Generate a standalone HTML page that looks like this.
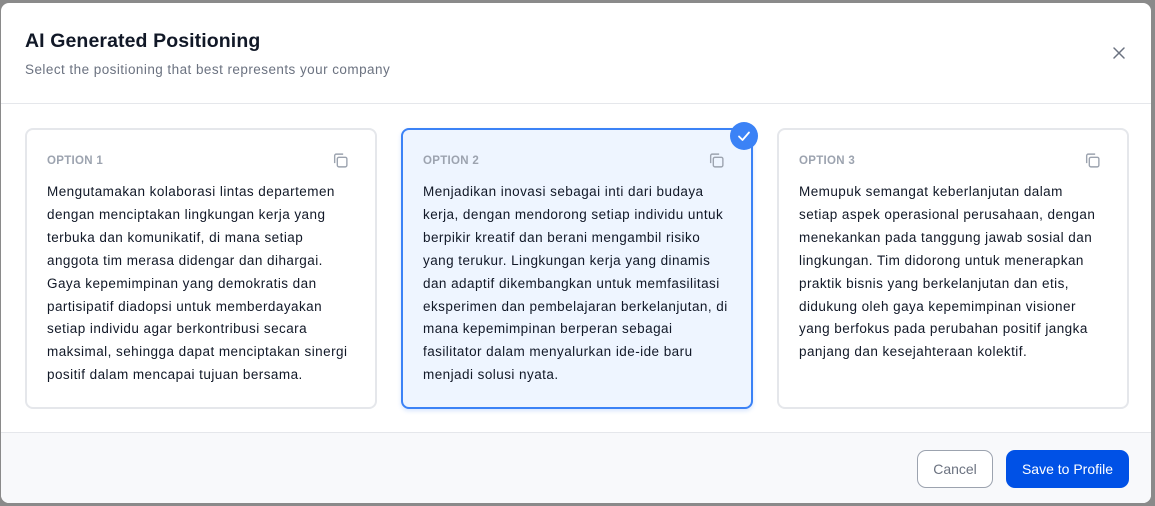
<!DOCTYPE html>
<html><head><style>
body{margin:0;width:1155px;height:506px;background:#8a8a8a;font-family:"Liberation Sans",sans-serif;overflow:hidden;position:relative}
.m{position:absolute;left:1px;top:3px;width:1150px;height:500px;background:#fff;border-radius:8px;overflow:hidden}
.t{position:absolute;left:24px;top:27px;font-size:19.5px;font-weight:bold;color:#111827;letter-spacing:.1px}
.s{position:absolute;left:24px;top:59px;font-size:13.5px;color:#6b7280;letter-spacing:.45px}
.x{position:absolute;left:1108px;top:40px;width:20px;height:20px}
.hd{position:absolute;left:0;top:100px;width:100%;border-top:1px solid #e5e7eb}
.c{position:absolute;top:125px;width:348px;height:277px;border:2px solid #e5e7eb;border-radius:8px;box-sizing:content-box;background:#fff}
.c.sel{border-color:#3b82f6;background:#eef5ff;box-shadow:0 2px 4px rgba(59,130,246,.2)}
.lb{position:absolute;left:20px;top:25px;font-size:11.5px;font-weight:bold;color:#9ca3af;letter-spacing:.3px}
.cp{position:absolute;right:26px;top:22px}
.tx{position:absolute;left:20px;top:51px;width:330px;font-size:13.5px;line-height:22.9px;color:#111827;white-space:nowrap;letter-spacing:.45px}
.ck{position:absolute;left:729px;top:119px;width:28px;height:28px;border-radius:50%;background:#3b82f6}
.ft{position:absolute;left:0;top:429px;width:100%;height:71px;background:#f8f9fb;border-top:1px solid #e5e7eb}
.b1{position:absolute;left:916px;top:447px;width:74px;height:36px;border:1px solid #9ca3af;border-radius:9px;font-size:14px;color:#6b7280;text-align:center;line-height:36px;background:#fff}
.b2{position:absolute;left:1005px;top:447px;width:123px;height:38px;border-radius:9px;background:#0051e6;color:#fff;font-size:14px;text-align:center;line-height:38px}
</style></head><body>
<div class="m">
<div class="t">AI Generated Positioning</div>
<div class="s">Select the positioning that best represents your company</div>
<svg class="x" viewBox="0 0 20 20"><path d="M5 5L15 15M15 5L5 15" stroke="#6b7280" stroke-width="1.5" stroke-linecap="round"/></svg>
<div class="hd"></div>
<div class="c" style="left:24px"><div class="lb">OPTION 1</div><svg class="cp" width="17" height="17" viewBox="0 0 16 16"><rect x="5" y="5" width="9" height="9" rx="1.5" fill="none" stroke="#9ca3af" stroke-width="1.3"/><path d="M2.5 10.5V3.5A1.5 1.5 0 0 1 4 2H10.5" fill="none" stroke="#9ca3af" stroke-width="1.3"/></svg>
<div class="tx">Mengutamakan kolaborasi lintas departemen<br>dengan menciptakan lingkungan kerja yang<br>terbuka dan komunikatif, di mana setiap<br>anggota tim merasa didengar dan dihargai.<br>Gaya kepemimpinan yang demokratis dan<br>partisipatif diadopsi untuk memberdayakan<br>setiap individu agar berkontribusi secara<br>maksimal, sehingga dapat menciptakan sinergi<br>positif dalam mencapai tujuan bersama.</div></div>
<div class="c sel" style="left:400px"><div class="lb">OPTION 2</div><svg class="cp" width="17" height="17" viewBox="0 0 16 16"><rect x="5" y="5" width="9" height="9" rx="1.5" fill="none" stroke="#9ca3af" stroke-width="1.3"/><path d="M2.5 10.5V3.5A1.5 1.5 0 0 1 4 2H10.5" fill="none" stroke="#9ca3af" stroke-width="1.3"/></svg>
<div class="tx">Menjadikan inovasi sebagai inti dari budaya<br>kerja, dengan mendorong setiap individu untuk<br>berpikir kreatif dan berani mengambil risiko<br>yang terukur. Lingkungan kerja yang dinamis<br>dan adaptif dikembangkan untuk memfasilitasi<br>eksperimen dan pembelajaran berkelanjutan, di<br>mana kepemimpinan berperan sebagai<br>fasilitator dalam menyalurkan ide-ide baru<br>menjadi solusi nyata.</div></div>
<div class="c" style="left:776px"><div class="lb">OPTION 3</div><svg class="cp" width="17" height="17" viewBox="0 0 16 16"><rect x="5" y="5" width="9" height="9" rx="1.5" fill="none" stroke="#9ca3af" stroke-width="1.3"/><path d="M2.5 10.5V3.5A1.5 1.5 0 0 1 4 2H10.5" fill="none" stroke="#9ca3af" stroke-width="1.3"/></svg>
<div class="tx">Memupuk semangat keberlanjutan dalam<br>setiap aspek operasional perusahaan, dengan<br>menekankan pada tanggung jawab sosial dan<br>lingkungan. Tim didorong untuk menerapkan<br>praktik bisnis yang berkelanjutan dan etis,<br>didukung oleh gaya kepemimpinan visioner<br>yang berfokus pada perubahan positif jangka<br>panjang dan kesejahteraan kolektif.</div></div>
<svg class="ck" viewBox="0 0 28 28"><path d="M9 14.5L12.5 18L19 10.5" fill="none" stroke="#fff" stroke-width="1.8" stroke-linecap="round" stroke-linejoin="round"/></svg>
<div class="ft"></div>
<div class="b1">Cancel</div>
<div class="b2">Save to Profile</div>
</div>
</body></html>
